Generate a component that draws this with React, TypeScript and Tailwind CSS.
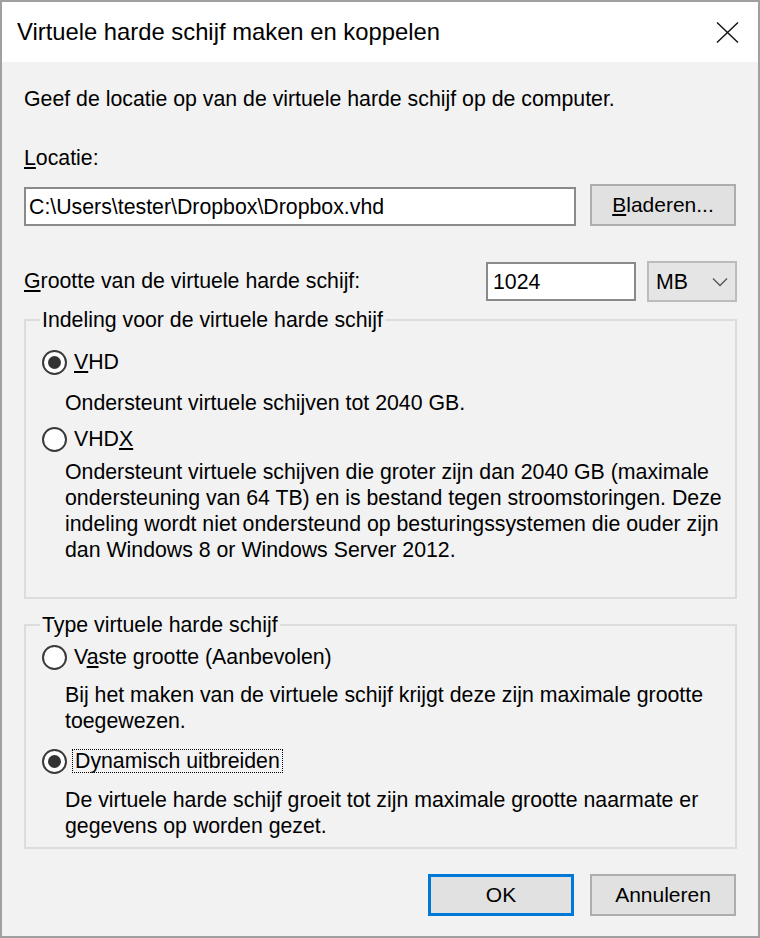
import React from "react"

const font = "font-['Liberation_Sans',Arial,sans-serif]"

function Radio({ checked }: { checked?: boolean }) {
  return (
    <span className="flex h-[25px] w-[25px] shrink-0 items-center justify-center rounded-full border-2 border-[#3a3a3a] bg-white">
      {checked && <span className="h-[13px] w-[13px] rounded-full bg-[#333]" />}
    </span>
  )
}

function Button({ children, primary }: { children: React.ReactNode; primary?: boolean }) {
  return (
    <button
      className={
        primary
          ? "flex h-[42px] w-[146px] items-center justify-center border-[3px] border-[#0078d7] bg-[#e1e1e1] text-[21px] leading-[26px] text-black"
          : "flex h-[42px] w-[146px] items-center justify-center border-2 border-[#adadad] bg-[#e1e1e1] text-[21px] leading-[26px] text-black"
      }
    >
      {children}
    </button>
  )
}

export default function App() {
  return (
    <div className={`flex h-[938px] w-[760px] flex-col border-2 border-[#a0a0a0] ${font} text-black`}>
      {/* title bar */}
      <div className="flex h-[60px] shrink-0 items-center justify-between bg-white pl-[15px] pr-[19px]">
        <span className="text-[23.8px] leading-[28px]">Virtuele harde schijf maken en koppelen</span>
        <svg width="23" height="21" viewBox="0 0 23 21" fill="none" stroke="#111" strokeWidth="1.4">
          <path d="M1 0.5 L22 20.5 M22 0.5 L1 20.5" />
        </svg>
      </div>

      {/* body */}
      <div className="flex flex-1 flex-col bg-[#f2f2f2] pl-[22px] pr-[21px] text-[21.3px] leading-[26px]">
        <p className="mt-[24px]">Geef de locatie op van de virtuele harde schijf op de computer.</p>

        <p className="mt-[33px]">
          <u>L</u>ocatie:
        </p>

        <div className="mt-[13px] flex items-end">
          <div className="flex h-[39px] w-[552px] items-center border-2 border-[#8a8a8a] bg-white pl-[3px]">
            C:\Users\tester\Dropbox\Dropbox.vhd
          </div>
          <div className="ml-[14px]">
            <Button>
              <u>B</u>laderen...
            </Button>
          </div>
        </div>

        <div className="mt-[35px] flex items-center">
          <span className="flex-1 -translate-y-[1px]">
            <u>G</u>rootte van de virtuele harde schijf:
          </span>
          <div className="flex h-[39px] w-[150px] items-center border-2 border-[#8a8a8a] bg-white pl-[5px]">1024</div>
          <div className="ml-[11px] flex h-[41px] w-[90px] items-center justify-between border-2 border-[#bcbcbc] bg-[#e5e5e5] pl-[7px] pr-[7px]">
            <span>MB</span>
            <svg width="16" height="10" viewBox="0 0 16 10" fill="none" stroke="#555" strokeWidth="1.3">
              <path d="M1 1.5 L8 8.5 L15 1.5" />
            </svg>
          </div>
        </div>

        {/* group: indeling */}
        <fieldset className="mt-[5px] border-2 border-[#dcdcdc]">
          <legend className="ml-[14px] px-[2px]">Indeling voor de virtuele harde schijf</legend>
          <div className="pb-[34px] pl-[16px]">
            <div className="mt-[16px] flex h-[26px] items-center gap-[7px]">
              <Radio checked />
              <span>
                <u>V</u>HD
              </span>
            </div>
            <p className="ml-[23px] mt-[15px] whitespace-nowrap">Ondersteunt virtuele schijven tot 2040 GB.</p>
            <div className="mt-[10px] flex h-[26px] items-center gap-[7px]">
              <Radio />
              <span>
                VHD<u>X</u>
              </span>
            </div>
            <p className="ml-[23px] mt-[7px] whitespace-nowrap">
              Ondersteunt virtuele schijven die groter zijn dan 2040 GB (maximale
              <br />
              ondersteuning van 64 TB) en is bestand tegen stroomstoringen. Deze
              <br />
              indeling wordt niet ondersteund op besturingssystemen die ouder zijn
              <br />
              dan Windows 8 or Windows Server 2012.
            </p>
          </div>
        </fieldset>

        {/* group: type */}
        <fieldset className="mt-[13px] border-2 border-[#dcdcdc]">
          <legend className="ml-[14px] px-[2px]">Type virtuele harde schijf</legend>
          <div className="pb-[8px] pl-[16px]">
            <div className="mt-[6px] flex h-[26px] items-center gap-[7px]">
              <Radio />
              <span>
                V<u>a</u>ste grootte (Aanbevolen)
              </span>
            </div>
            <p className="ml-[23px] mt-[12px] whitespace-nowrap">
              Bij het maken van de virtuele schijf krijgt deze zijn maximale grootte
              <br />
              toegewezen.
            </p>
            <div className="mt-[14px] flex h-[26px] items-center gap-[5px]">
              <Radio checked />
              <span className="border border-dotted border-black px-[2px] leading-[22px]">Dynamisch uitbreiden</span>
            </div>
            <p className="ml-[23px] mt-[13px] whitespace-nowrap">
              De virtuele harde schijf groeit tot zijn maximale grootte naarmate er
              <br />
              gegevens op worden gezet.
            </p>
          </div>
        </fieldset>

        <div className="mr-[1px] mt-[25px] flex justify-end gap-[16px]">
          <Button primary>OK</Button>
          <Button>Annuleren</Button>
        </div>
      </div>
    </div>
  )
}
